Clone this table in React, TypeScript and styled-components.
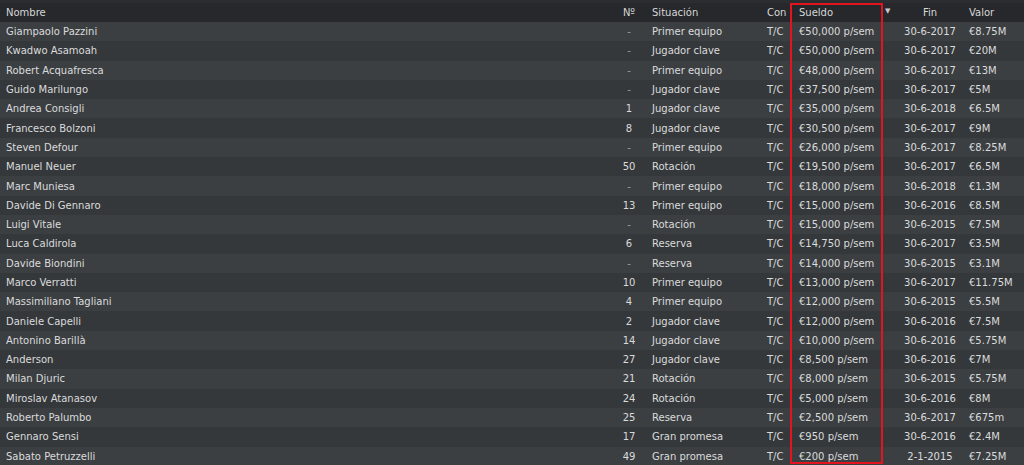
import React from "react";
import styled, { createGlobalStyle } from "styled-components";

const GlobalStyle = createGlobalStyle`
	html, body {
		margin: 0;
		padding: 0;
		background: #2b2d30;
	}
	body {
		font-family: "DejaVu Sans", "Liberation Sans", sans-serif;
	}
`;

const Screen = styled.div`
	position: relative;
	width: 1024px;
	height: 465px;
	overflow: hidden;
	background: #2b2d30;
	padding-top: 3px;
	box-sizing: border-box;
`;

const COLUMNS = "612px 34px 116px 28px 93px 12px 70px 1fr";

const HeaderRow = styled.div`
	display: grid;
	grid-template-columns: ${COLUMNS};
	height: 19px;
	align-items: center;
	background: #26282b;
	color: #d6d7d8;
	font-size: 10px;
`;

const Row = styled.div<{ $odd: boolean }>`
	display: grid;
	grid-template-columns: ${COLUMNS};
	height: 19.3px;
	align-items: center;
	background: ${(p) => (p.$odd ? "#3c3f42" : "#35383b")};
	color: #dadbdc;
	font-size: 10px;
`;

const Cell = styled.div<{ $align?: "left" | "center"; $pad?: number; $dim?: boolean }>`
	text-align: ${(p) => p.$align || "left"};
	padding-left: ${(p) => p.$pad ?? 0}px;
	white-space: nowrap;
	overflow: hidden;
	color: ${(p) => (p.$dim ? "#9c9ea0" : "inherit")};
`;

const SortArrow = styled.div`
	font-size: 7px;
	color: #c8c9ca;
	padding-left: 2px;
	margin-top: -4px;
`;

const Highlight = styled.div`
	position: absolute;
	left: 790px;
	top: 3px;
	width: 93px;
	height: 461px;
	border: 2px solid #e3141f;
	box-sizing: border-box;
	pointer-events: none;
`;

type Player = [string, string, string, string, string, string];

const players: Player[] = [
	["Giampaolo Pazzini", "-", "Primer equipo", "€50,000", "30-6-2017", "€8.75M"],
	["Kwadwo Asamoah", "-", "Jugador clave", "€50,000", "30-6-2017", "€20M"],
	["Robert Acquafresca", "-", "Primer equipo", "€48,000", "30-6-2017", "€13M"],
	["Guido Marilungo", "-", "Jugador clave", "€37,500", "30-6-2017", "€5M"],
	["Andrea Consigli", "1", "Jugador clave", "€35,000", "30-6-2018", "€6.5M"],
	["Francesco Bolzoni", "8", "Jugador clave", "€30,500", "30-6-2017", "€9M"],
	["Steven Defour", "-", "Primer equipo", "€26,000", "30-6-2017", "€8.25M"],
	["Manuel Neuer", "50", "Rotación", "€19,500", "30-6-2017", "€6.5M"],
	["Marc Muniesa", "-", "Primer equipo", "€18,000", "30-6-2018", "€1.3M"],
	["Davide Di Gennaro", "13", "Primer equipo", "€15,000", "30-6-2016", "€8.5M"],
	["Luigi Vitale", "-", "Rotación", "€15,000", "30-6-2015", "€7.5M"],
	["Luca Caldirola", "6", "Reserva", "€14,750", "30-6-2017", "€3.5M"],
	["Davide Biondini", "-", "Reserva", "€14,000", "30-6-2015", "€3.1M"],
	["Marco Verratti", "10", "Primer equipo", "€13,000", "30-6-2017", "€11.75M"],
	["Massimiliano Tagliani", "4", "Primer equipo", "€12,000", "30-6-2015", "€5.5M"],
	["Daniele Capelli", "2", "Jugador clave", "€12,000", "30-6-2016", "€7.5M"],
	["Antonino Barillà", "14", "Jugador clave", "€10,000", "30-6-2016", "€5.75M"],
	["Anderson", "27", "Jugador clave", "€8,500", "30-6-2016", "€7M"],
	["Milan Djuric", "21", "Rotación", "€8,000", "30-6-2015", "€5.75M"],
	["Miroslav Atanasov", "24", "Rotación", "€5,000", "30-6-2016", "€8M"],
	["Roberto Palumbo", "25", "Reserva", "€2,500", "30-6-2017", "€675m"],
	["Gennaro Sensi", "17", "Gran promesa", "€950", "30-6-2016", "€2.4M"],
	["Sabato Petruzzelli", "49", "Gran promesa", "€200", "2-1-2015", "€7.25M"],
];

const App: React.FC = () => {
	return (
		<Screen>
			<GlobalStyle />
			<HeaderRow>
				<Cell $pad={6}>Nombre</Cell>
				<Cell $align="center">Nº</Cell>
				<Cell $pad={6}>Situación</Cell>
				<Cell $pad={5}>Con</Cell>
				<Cell $pad={9}>Sueldo</Cell>
				<SortArrow>▼</SortArrow>
				<Cell $align="center">Fin</Cell>
				<Cell $pad={4}>Valor</Cell>
			</HeaderRow>
			{players.map((p, i) => (
				<Row key={p[0]} $odd={i % 2 === 0}>
					<Cell $pad={6}>{p[0]}</Cell>
					<Cell $align="center" $dim={p[1] === "-"}>
						{p[1]}
					</Cell>
					<Cell $pad={6}>{p[2]}</Cell>
					<Cell $pad={5}>T/C</Cell>
					<Cell $pad={9}>{p[3]} p/sem</Cell>
					<div />
					<Cell $align="center">{p[4]}</Cell>
					<Cell $pad={4}>{p[5]}</Cell>
				</Row>
			))}
			<Highlight />
		</Screen>
	);
};

export default App;
